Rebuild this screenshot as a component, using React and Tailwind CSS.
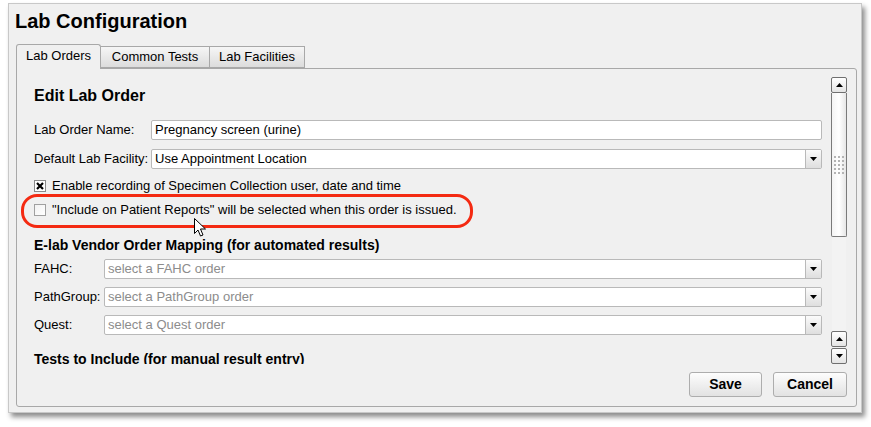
import React from "react";

const font = { fontFamily: '"Liberation Sans", Arial, sans-serif' };

function Caret() {
  return (
    <svg width="7" height="4" viewBox="0 0 7 4">
      <path d="M0 0h7L3.5 4z" fill="#000" />
    </svg>
  );
}

function Select({ value, placeholder }) {
  return (
    <div className="flex-1 flex h-[20px] bg-white border border-[#b9b9b9] rounded-[2px] overflow-hidden">
      <div
        className={`flex-1 flex items-center px-[3px] text-[13px] ${
          value ? "text-black" : "text-[#8c8c8c]"
        }`}
      >
        {value || placeholder}
      </div>
      <div className="w-[16px] flex items-center justify-center border-l border-[#b9b9b9] bg-gradient-to-b from-[#fbfbfb] to-[#dedede]">
        <Caret />
      </div>
    </div>
  );
}

function Row({ label, width, children, mt }) {
  return (
    <div className={`flex items-center h-[20px] ${mt}`}>
      <div className={`${width} shrink-0 text-[13px] text-black`}>{label}</div>
      {children}
    </div>
  );
}

function ScrollBtn({ down }) {
  return (
    <div className="h-[16px] w-[16px] flex items-center justify-center bg-gradient-to-b from-white to-[#e4e4e4] border border-[#6f6f6f] rounded-[2px]">
      <svg width="7" height="4" viewBox="0 0 7 4">
        <path d={down ? "M0 0h7L3.5 4z" : "M0 4h7L3.5 0z"} fill="#000" />
      </svg>
    </div>
  );
}

function Scrollbar() {
  return (
    <div className="w-[16px] flex flex-col">
      <ScrollBtn />
      <div className="h-[144px] bg-gradient-to-r from-[#f4f4f4] via-white to-[#e6e6e6] border border-t-0 border-[#7a7a7a] rounded-b-[2px] flex items-center justify-center">
        <div className="grid grid-cols-3 gap-x-[2px] gap-y-[2px]">
          {Array.from({ length: 15 }).map((_, i) => (
            <div key={i} className="w-[2px] h-[2px] bg-[#b4b4b4]" />
          ))}
        </div>
      </div>
      <div className="flex-1 mx-[1px] bg-[#f3f3f3] bg-[radial-gradient(#dcdcdc_0.6px,transparent_0.7px)] bg-[length:2px_2px]" />
      <ScrollBtn />
      <div className="h-[1px]" />
      <ScrollBtn down />
    </div>
  );
}

function Cursor() {
  return (
    <svg
      width="13"
      height="19"
      viewBox="0 0 13 19"
      className="absolute left-[194px] top-[218px]"
    >
      <path
        d="M0.5 0.5v15l3.5-3.5 2.5 6 2.5-1-2.5-6h5z"
        fill="#fff"
        stroke="#000"
        strokeWidth="1"
        strokeLinejoin="round"
      />
    </svg>
  );
}

export default function App() {
  return (
    <div className="w-[871px] h-[427px] bg-white pt-[3px] pl-[8px] relative" style={font}>
      <div className="w-[854px] h-[410px] bg-[#f0f0f0] border border-[#c8c8c8] shadow-[3px_4px_5px_rgba(0,0,0,0.45)] flex flex-col">
        <div className="h-[34px] pl-[6px] pt-[4px] text-[20px] font-bold text-black leading-[26px]">
          Lab Configuration
        </div>
        <div className="flex items-end h-[30px] pl-[7px]">
          <div className="h-[25px] w-[85px] flex items-center justify-center text-[13px] bg-[#f0f0f0] border border-b-0 border-[#a8a8a8] rounded-t-[3px] relative z-10 -mb-[1px] pb-[2px]">
            Lab Orders
          </div>
          <div className="h-[22px] w-[109px] flex items-center justify-center text-[13px] bg-gradient-to-b from-[#f6f6f6] to-[#dcdcdc] border border-l-0 border-[#a8a8a8]">
            Common Tests
          </div>
          <div className="h-[22px] w-[95px] flex items-center justify-center text-[13px] bg-gradient-to-b from-[#f6f6f6] to-[#dcdcdc] border border-l-0 border-[#a8a8a8]">
            Lab Facilities
          </div>
        </div>
        <div className="ml-[7px] mr-[4px] h-[339px] border border-[#a8a8a8] rounded-[3px] rounded-tl-none flex flex-col">
          <div className="flex h-[295px]">
            <div className="flex-1 overflow-hidden pl-[17px] pr-[9px]">
              <div className="mt-[17px] h-[20px] text-[16px] font-bold leading-[20px]">
                Edit Lab Order
              </div>
              <Row label="Lab Order Name:" width="w-[117px]" mt="mt-[14px]">
                <div className="flex-1 h-[20px] bg-white border border-[#b9b9b9] rounded-[2px] flex items-center px-[3px] text-[13px]">
                  Pregnancy screen (urine)
                </div>
              </Row>
              <Row label="Default Lab Facility:" width="w-[117px]" mt="mt-[9px]">
                <Select value="Use Appointment Location" />
              </Row>
              <div className="flex items-center h-[20px] mt-[7px] text-[13px]">
                <div className="w-[12px] h-[12px] border border-[#8a8a8a] bg-white flex items-center justify-center mr-[6px]">
                  <svg width="8" height="8" viewBox="0 0 8 8">
                    <path d="M1 1l6 6M7 1l-6 6" stroke="#000" strokeWidth="2.2" />
                  </svg>
                </div>
                Enable recording of Specimen Collection user, date and time
              </div>
              <div className="relative flex items-center h-[20px] mt-[4px] text-[13px]">
                <div className="w-[12px] h-[12px] border border-[#a0a0a0] bg-gradient-to-br from-[#f2f2f2] to-white mr-[6px]" />
                "Include on Patient Reports" will be selected when this order is issued.
                <div className="absolute left-[-13px] top-[-6px] w-[452px] h-[34px] border-[3px] border-[#f42a12] rounded-[16px]" />
              </div>
              <div className="mt-[15px] h-[20px] text-[14px] font-bold leading-[20px]">
                E-lab Vendor Order Mapping (for automated results)
              </div>
              <Row label="FAHC:" width="w-[70px]" mt="mt-[4px]">
                <Select placeholder="select a FAHC order" />
              </Row>
              <Row label="PathGroup:" width="w-[70px]" mt="mt-[8px]">
                <Select placeholder="select a PathGroup order" />
              </Row>
              <Row label="Quest:" width="w-[70px]" mt="mt-[8px]">
                <Select placeholder="select a Quest order" />
              </Row>
              <div className="mt-[14px] h-[20px] text-[14px] font-bold leading-[20px]">
                Tests to Include (for manual result entry)
              </div>
            </div>
            <div className="pt-[8px] mr-[9px] flex">
              <Scrollbar />
            </div>
          </div>
          <div className="flex justify-end gap-[11px] pr-[9px] mt-[8px]">
            <button className="w-[73px] h-[25px] text-[14px] font-bold bg-gradient-to-b from-[#fdfdfd] to-[#e2e2e2] border border-[#adadad] rounded-[3px]">
              Save
            </button>
            <button className="w-[74px] h-[25px] text-[14px] font-bold bg-gradient-to-b from-[#fdfdfd] to-[#e2e2e2] border border-[#adadad] rounded-[3px]">
              Cancel
            </button>
          </div>
        </div>
      </div>
      <Cursor />
    </div>
  );
}
